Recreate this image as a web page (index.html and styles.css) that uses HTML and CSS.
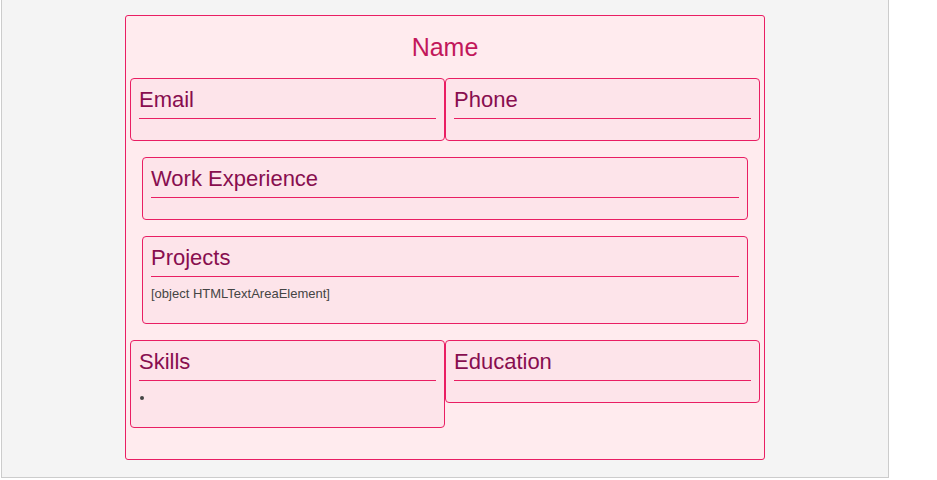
FILE: index.html
```html
<!DOCTYPE html>
<html>
<head>
<meta charset="utf-8">
<link rel="stylesheet" href="styles.css">
</head>
<body>
<div class="page">
  <div class="resume">
    <h1 class="name">Name</h1>
    <div class="row">
      <div class="box"><h2 class="box-title">Email</h2></div>
      <div class="box"><h2 class="box-title">Phone</h2></div>
    </div>
    <div class="box wide first-wide"><h2 class="box-title">Work Experience</h2></div>
    <div class="box wide"><h2 class="box-title">Projects</h2><p class="box-text">[object HTMLTextAreaElement]</p></div>
    <div class="row last-row">
      <div class="box"><h2 class="box-title">Skills</h2><ul class="box-list"><li></li></ul></div>
      <div class="box"><h2 class="box-title">Education</h2></div>
    </div>
  </div>
</div>
</body>
</html>
```
FILE: styles.css
```css
html, body {
  margin: 0;
  padding: 0;
  background: #ffffff;
  font-family: "Liberation Sans", Arial, sans-serif;
}
.page {
  margin-left: 1px;
  width: 886px;
  height: 462px;
  padding-top: 15px;
  background: #f4f4f4;
  border: 1px solid #cccccc;
  border-top: none;
}
.resume {
  width: 630px;
  margin: 0 auto;
  padding: 17px 4px 4px;
  background: #ffebee;
  border: 1px solid #e91e63;
  border-radius: 3px;
}
.name {
  margin: 0 0 16px;
  font-size: 25px;
  line-height: 29px;
  font-weight: normal;
  text-align: center;
  color: #c2185b;
}
.row {
  display: flex;
  align-items: flex-start;
}
.row .box {
  flex: 1 1 0;
}
.last-row {
  margin-bottom: 27px;
}
.box {
  padding: 8px 8px 12px;
  background: #fde4ea;
  border: 1px solid #e91e63;
  border-radius: 4px;
}
.wide {
  margin: 0 12px 16px;
}
.first-wide {
  margin-top: 16px;
}
.box-title {
  margin: 0 0 9px;
  padding-bottom: 6px;
  font-size: 22px;
  line-height: 25px;
  font-weight: normal;
  color: #880e4f;
  border-bottom: 1px solid #e91e63;
}
.box-text {
  margin: 0 0 10px;
  font-size: 13px;
  line-height: 15px;
  color: #444444;
}
.box-list {
  margin: 0 0 10px;
  padding: 0 0 0 1px;
  list-style: disc inside;
  font-size: 13px;
  line-height: 15px;
  color: #444444;
}
```
